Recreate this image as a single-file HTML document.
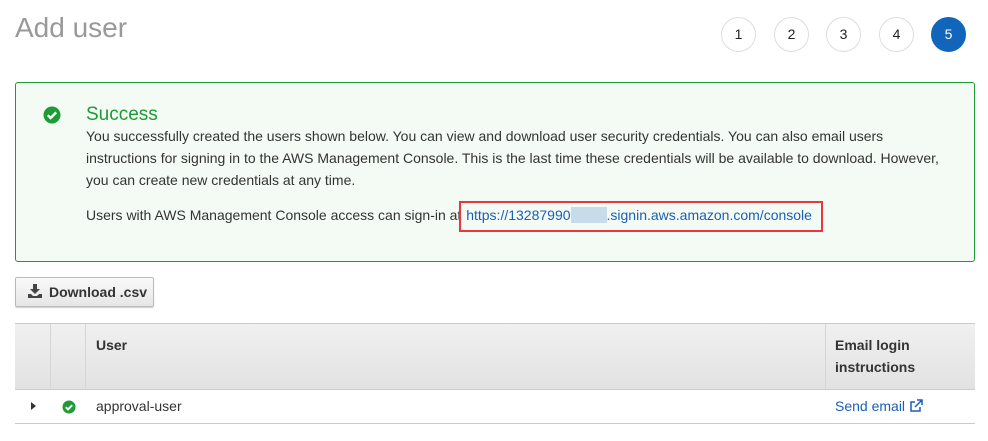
<!DOCTYPE html>
<html><head><style>
body{margin:0;width:988px;height:441px;background:#fff;font-family:"Liberation Sans",Arial,sans-serif;position:relative;overflow:hidden;color:#333}
.a{position:absolute}
h1{position:absolute;left:15px;top:12px;margin:0;font-weight:400;font-size:28px;color:#999}
.c{position:absolute;top:17px;width:33px;height:33px;border:1px solid #ddd;border-radius:50%;text-align:center;line-height:33px;font-size:14px;color:#222;background:#fff}
.box{left:15px;top:82px;width:958px;height:178px;border:1px solid #1d9b34;border-radius:3px;background:#f4fbf5}
.t{font-size:14px;line-height:22px;color:#333}
.th{font-weight:bold;font-size:14px;color:#333}
</style></head><body>
<h1>Add user</h1>
<div class="c" style="left:721px">1</div>
<div class="c" style="left:774px">2</div>
<div class="c" style="left:826px">3</div>
<div class="c" style="left:879px">4</div>
<div class="c" style="left:931px;background:#1166bb;border-color:#1166bb;color:#fff">5</div>
<div class="a box"></div>
<svg class="a" style="left:43px;top:106px" width="18" height="18" viewBox="0 0 18 18"><circle cx="9" cy="9" r="8.5" fill="#1d9b34"/><path d="M4.8 9.2l2.8 2.8 5.6-5.6" stroke="#fff" stroke-width="2.4" fill="none"/></svg>
<div class="a" style="left:86px;top:104px;font-size:19px;color:#1d9b34">Success</div>
<div class="a t" style="left:86px;top:125px;width:860px">You successfully created the users shown below. You can view and download user security credentials. You can also email users instructions for signing in to the AWS Management Console. This is the last time these credentials will be available to download. However, you can create new credentials at any time.</div>
<div class="a t" style="left:86px;top:204px;white-space:nowrap">Users with AWS Management Console access can sign-in at <span style="color:#1a5fb4;margin-left:1px">https://13287990<span style="display:inline-block;width:36px;height:16px;background:#c6dcea;vertical-align:-3px"></span>.signin.aws.amazon.com/console</span></div>
<div class="a" style="left:459px;top:201px;width:360px;height:27px;border:2px solid #e8383d"></div>
<div class="a" style="left:15px;top:277px;width:137px;height:28px;border:1px solid #bbb;border-radius:2px;background:linear-gradient(#f9f9f9,#e6e6e6);box-shadow:0 1px 1px rgba(0,0,0,.2)"></div>
<svg class="a" style="left:28px;top:284px" width="14" height="14" viewBox="0 0 14 14"><path d="M5 0h4v5h3l-5 5-5-5h3z" fill="#444"/><path d="M0 10h3l2 2h4l2-2h3v4H0z" fill="#444"/></svg>
<div class="a th" style="left:49px;top:284px">Download .csv</div>
<div class="a" style="left:15px;top:323px;width:960px;height:65px;background:linear-gradient(#f0f0f0,#e2e2e2);border-top:1px solid #ccc;border-bottom:1px solid #ccc"></div>
<div class="a" style="left:50px;top:324px;width:1px;height:64px;background:#d5d5d5"></div>
<div class="a" style="left:85px;top:324px;width:1px;height:64px;background:#d5d5d5"></div>
<div class="a" style="left:825px;top:324px;width:1px;height:64px;background:#d5d5d5"></div>
<div class="a th" style="left:96px;top:337px">User</div>
<div class="a th" style="left:835px;top:334px;line-height:22px">Email login<br>instructions</div>
<div class="a" style="left:15px;top:423px;width:960px;height:1px;background:#ccc"></div>
<div class="a" style="left:31px;top:402px;width:0;height:0;border-left:5px solid #333;border-top:4px solid transparent;border-bottom:4px solid transparent"></div>
<svg class="a" style="left:62px;top:400px" width="14" height="14" viewBox="0 0 14 14"><circle cx="7" cy="7" r="6.5" fill="#1d9b34"/><path d="M3.8 7.2l2.2 2.2 4.2-4.2" stroke="#fff" stroke-width="2" fill="none"/></svg>
<div class="a t" style="left:96px;top:395px">approval-user</div>
<div class="a t" style="left:835px;top:395px;color:#1a5fb4">Send email <svg width="14" height="14" viewBox="0 0 14 14" style="vertical-align:-2px"><path d="M11 8v4H2V3h4" stroke="#1a5fb4" stroke-width="1.5" fill="none"/><path d="M8 1h5v5M13 1L6 8" stroke="#1a5fb4" stroke-width="1.5" fill="none"/></svg></div>
</body></html>
